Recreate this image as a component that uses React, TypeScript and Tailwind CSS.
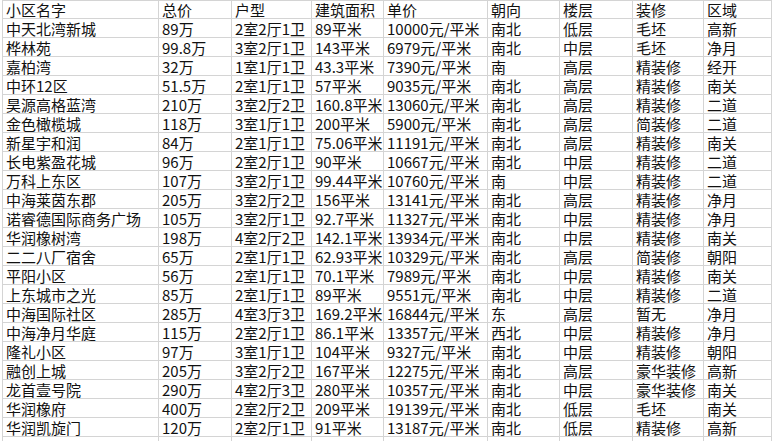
const columns = [
  { key: 'name', title: '小区名字', width: 'w-[156px]' },
  { key: 'price', title: '总价', width: 'w-[73px]' },
  { key: 'layout', title: '户型', width: 'w-[80px]' },
  { key: 'area', title: '建筑面积', width: 'w-[72px]' },
  { key: 'unit', title: '单价', width: 'w-[104px]' },
  { key: 'facing', title: '朝向', width: 'w-[72px]' },
  { key: 'floor', title: '楼层', width: 'w-[73px]' },
  { key: 'deco', title: '装修', width: 'w-[71px]' },
  { key: 'zone', title: '区域', width: 'w-[68px]' },
];

// 小区名字, 总价, 户型, 建筑面积, 单价, 朝向, 楼层, 装修, 区域
const rows: string[][] = [
  ['中天北湾新城', '89万', '2室2厅1卫', '89平米', '10000元/平米', '南北', '低层', '毛坯', '高新'],
  ['桦林苑', '99.8万', '3室2厅1卫', '143平米', '6979元/平米', '南北', '中层', '毛坯', '净月'],
  ['嘉柏湾', '32万', '1室1厅1卫', '43.3平米', '7390元/平米', '南', '高层', '精装修', '经开'],
  ['中环12区', '51.5万', '2室1厅1卫', '57平米', '9035元/平米', '南北', '高层', '精装修', '南关'],
  ['昊源高格蓝湾', '210万', '3室2厅2卫', '160.8平米', '13060元/平米', '南北', '高层', '精装修', '二道'],
  ['金色橄榄城', '118万', '3室1厅1卫', '200平米', '5900元/平米', '南北', '高层', '简装修', '二道'],
  ['新星宇和润', '84万', '2室1厅1卫', '75.06平米', '11191元/平米', '南北', '高层', '精装修', '南关'],
  ['长电紫盈花城', '96万', '2室2厅1卫', '90平米', '10667元/平米', '南北', '中层', '精装修', '二道'],
  ['万科上东区', '107万', '3室2厅1卫', '99.44平米', '10760元/平米', '南', '中层', '精装修', '二道'],
  ['中海莱茵东郡', '205万', '3室2厅2卫', '156平米', '13141元/平米', '南北', '高层', '精装修', '净月'],
  ['诺睿德国际商务广场', '105万', '3室2厅1卫', '92.7平米', '11327元/平米', '南北', '中层', '精装修', '净月'],
  ['华润橡树湾', '198万', '4室2厅2卫', '142.1平米', '13934元/平米', '南北', '中层', '精装修', '南关'],
  ['二二八厂宿舍', '65万', '2室1厅1卫', '62.93平米', '10329元/平米', '南北', '高层', '简装修', '朝阳'],
  ['平阳小区', '56万', '2室1厅1卫', '70.1平米', '7989元/平米', '南北', '中层', '精装修', '南关'],
  ['上东城市之光', '85万', '2室1厅1卫', '89平米', '9551元/平米', '南北', '中层', '精装修', '二道'],
  ['中海国际社区', '285万', '4室3厅3卫', '169.2平米', '16844元/平米', '东', '高层', '暂无', '净月'],
  ['中海净月华庭', '115万', '2室2厅1卫', '86.1平米', '13357元/平米', '西北', '中层', '精装修', '净月'],
  ['隆礼小区', '97万', '3室1厅1卫', '104平米', '9327元/平米', '南北', '中层', '精装修', '朝阳'],
  ['融创上城', '205万', '3室2厅2卫', '167平米', '12275元/平米', '南北', '高层', '豪华装修', '高新'],
  ['龙首壹号院', '290万', '4室2厅3卫', '280平米', '10357元/平米', '南北', '中层', '豪华装修', '南关'],
  ['华润橡府', '400万', '2室2厅2卫', '209平米', '19139元/平米', '南北', '低层', '毛坯', '南关'],
  ['华润凯旋门', '120万', '2室2厅1卫', '91平米', '13187元/平米', '南北', '低层', '精装修', '高新'],
];

function Row({ cells, header }: { cells: string[]; header?: boolean }) {
  return (
    <div className={`flex border-b border-[#d4d4d4] ${header ? 'h-[18px]' : 'h-[19px]'}`}>
      {cells.map((text, i) => (
        <div
          key={i}
          className={`${columns[i].width} shrink-0 flex items-end border-r border-[#d4d4d4] pl-[3px] whitespace-nowrap`}
        >
          <span className="text-[15px] leading-[17px] text-[#111]">{text}</span>
        </div>
      ))}
    </div>
  );
}

export default function App() {
  return (
    <div
      className="w-[777px] h-[441px] overflow-hidden bg-white pl-[2px]"
      style={{ fontFamily: '"Noto Sans CJK SC", "Noto Sans", sans-serif' }}
    >
      <div className="w-max border-t border-l border-[#d4d4d4]">
        <Row header cells={columns.map((c) => c.title)} />
        {rows.map((r, i) => (
          <Row key={i} cells={r} />
        ))}
        <Row cells={['', '', '', '', '', '', '', '', '']} />
      </div>
    </div>
  );
}
